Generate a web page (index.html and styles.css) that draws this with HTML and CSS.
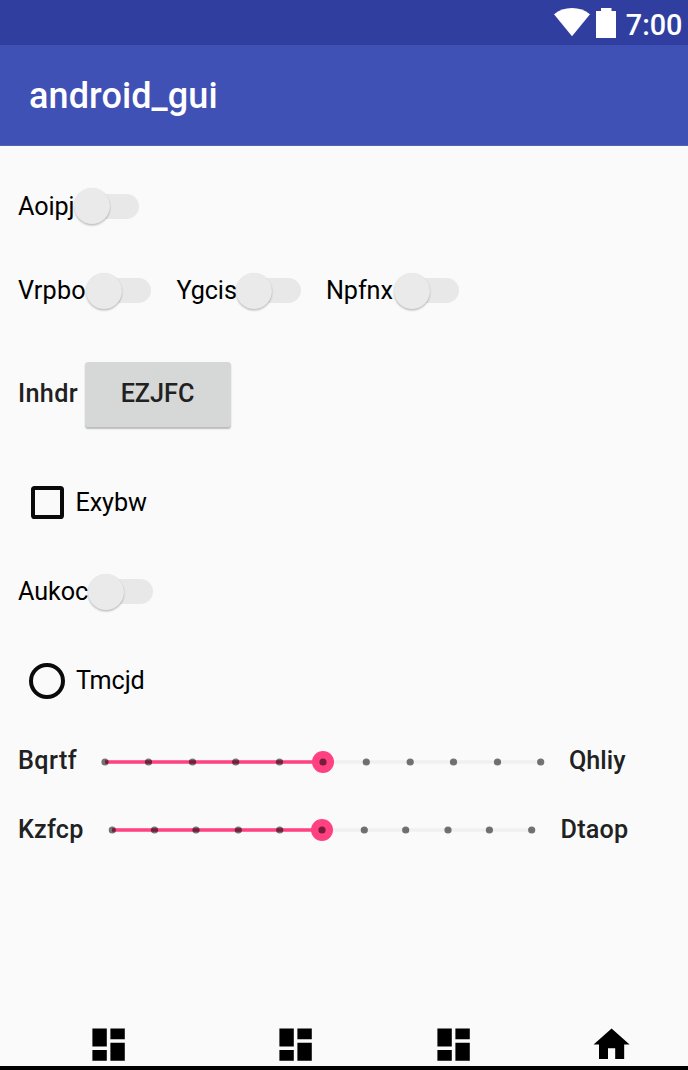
FILE: index.html
```html
<!DOCTYPE html>
<html lang="en">
<head>
<meta charset="utf-8">
<title>android_gui</title>
<link rel="stylesheet" href="styles.css">
</head>
<body>
<svg class="defs" width="0" height="0" aria-hidden="true">
  <symbol id="dashboard" viewBox="0 0 24 24"><path d="M3 13h8V3H3v10zm0 8h8v-6H3v6zm10 0h8V11h-8v10zm0-18v6h8V3h-8z"/></symbol>
  <symbol id="home" viewBox="0 0 24 24"><path d="M10 20v-6h4v6h5v-8h3L12 3 2 12h3v8z"/></symbol>
</svg>
<header class="status">
  <svg class="wifi" width="36" height="29" viewBox="0 0 36 29"><path d="M0 6.200C5 2.200 11 0 18 0s13 2.200 18 6.200L18 28.300z"/></svg>
  <svg class="battery" width="20" height="30" viewBox="0 0 20 30"><path d="M0 3h5V0h10.500v3H20v27H0z"/></svg>
  <span class="clock">7:00</span>
</header>
<div class="appbar"><h1 class="title">android_gui</h1></div>
<main class="content">
  <div class="row r1"><label class="toggle w1"><span class="text">Aoipj</span><span class="track"><span class="thumb"></span></span></label></div>
  <div class="row r2">
    <label class="toggle w2"><span class="text loose">Vrpbo</span><span class="track"><span class="thumb"></span></span></label>
    <label class="toggle w3"><span class="text">Ygcis</span><span class="track"><span class="thumb"></span></span></label>
    <label class="toggle w4"><span class="text">Npfnx</span><span class="track"><span class="thumb"></span></span></label>
  </div>
  <div class="row r3"><span class="caption button-caption">Inhdr</span><button class="button">EZJFC</button></div>
  <div class="row r4"><span class="checkbox"></span><span class="text">Exybw</span></div>
  <div class="row r5"><label class="toggle w5"><span class="text">Aukoc</span><span class="track"><span class="thumb"></span></span></label></div>
  <div class="row r6"><span class="radio"></span><span class="text">Tmcjd</span></div>
  <div class="row r7">
    <span class="caption start-a">Bqrtf</span>
    <svg class="slider" width="460" height="24" viewBox="93 0 460 24">
      <path class="rail" d="M105 12H541"/><path class="fill" d="M105 12H323"/><circle class="knob" cx="323" cy="12" r="11"/>
      <g class="ticks"><circle cx="105" cy="12" r="3.600"/><circle cx="148.500" cy="12" r="3.600"/><circle cx="192.500" cy="12" r="3.600"/><circle cx="235.700" cy="12" r="3.600"/><circle cx="279.500" cy="12" r="3.600"/><circle cx="323" cy="12" r="3.600"/><circle cx="366.300" cy="12" r="3.600"/><circle cx="410.200" cy="12" r="3.600"/><circle cx="453.500" cy="12" r="3.600"/><circle cx="497.500" cy="12" r="3.600"/><circle cx="540.700" cy="12" r="3.600"/></g>
    </svg>
    <span class="caption end-a">Qhliy</span>
  </div>
  <div class="row r8">
    <span class="caption start-b">Kzfcp</span>
    <svg class="slider" width="444" height="24" viewBox="100 0 444 24">
      <path class="rail" d="M112 12H532"/><path class="fill" d="M112 12H322"/><circle class="knob" cx="322" cy="12" r="11"/>
      <g class="ticks"><circle cx="112.300" cy="12" r="3.600"/><circle cx="154.500" cy="12" r="3.600"/><circle cx="196" cy="12" r="3.600"/><circle cx="238.300" cy="12" r="3.600"/><circle cx="279.700" cy="12" r="3.600"/><circle cx="322" cy="12" r="3.600"/><circle cx="364.300" cy="12" r="3.600"/><circle cx="405.700" cy="12" r="3.600"/><circle cx="448" cy="12" r="3.600"/><circle cx="489.400" cy="12" r="3.600"/><circle cx="531.700" cy="12" r="3.600"/></g>
    </svg>
    <span class="caption end-b">Dtaop</span>
  </div>
</main>
<nav class="nav">
  <svg class="icon n1"><use href="#dashboard"/></svg>
  <svg class="icon n2"><use href="#dashboard"/></svg>
  <svg class="icon n3"><use href="#dashboard"/></svg>
  <svg class="icon n4"><use href="#home"/></svg>
</nav>
<div class="bottom-edge"></div>
</body>
</html>
```
FILE: styles.css
```css
* { box-sizing: border-box; }
body { margin: 0; width: 688px; height: 1070px; overflow: hidden; display: flex; flex-direction: column; background: #fafafa; font-family: Roboto, sans-serif; font-size: 25.2px; line-height: 30px; color: #000; }
svg { display: block; flex: none; }
.defs { display: none; }
.status { flex: none; height: 45px; background: #303f9f; display: flex; align-items: flex-start; padding: 8px 5.500px 0 0; justify-content: flex-end; color: #fff; fill: #fff; }
.wifi { margin-right: 6.500px; }
.battery { margin-right: 9.500px; }
.clock { font-size: 28.8px; line-height: 34px; font-weight: 500; }
.appbar { flex: none; height: 101px; background: #3f51b5; padding: 2px 0 0 29px; display: flex; align-items: center; border-bottom: 1px solid #5162bc; }
.title { margin: 0; color: #fff; font-size: 36px; font-weight: 500; line-height: 44px; letter-spacing: 0.1px; }
.content { flex: none; height: 866px; }
.row { display: flex; align-items: center; padding-left: 18px; white-space: nowrap; }
.r1 { height: 120px; }
.r2 { height: 49px; }
.r3 { height: 158px; }
.r4 { height: 58px; padding-left: 31px; }
.r4 .text { padding-top: 1px; }
.r5 { height: 121px; }
.r6 { height: 58px; padding-left: 29px; }
.r6 .text { padding-bottom: 1px; }
.r7 { height: 103px; }
.r8 { height: 34px; }
.text { flex: 1; letter-spacing: -0.1px; }
.r1 .text, .r2 .text { padding-top: 1px; }
.text.loose { letter-spacing: 0.2px; }
.toggle { display: flex; align-items: center; flex: none; }
.w1 { width: 121px; }
.w2 { width: 133px; margin-right: 25.500px; }
.w3 { width: 124.500px; margin-right: 25px; }
.w4 { width: 133px; }
.w5 { width: 135px; }
.track { flex: none; width: 57px; height: 25px; border-radius: 13px; background: #e8e8e8; display: flex; align-items: center; }
.thumb { flex: none; width: 36px; height: 36px; margin-left: -8.500px; border-radius: 50%; background: #eaeaea; box-shadow: 0 1.500px 2px rgba(0,0,0,.23), 0 0 1px rgba(0,0,0,.08); }
.caption { flex: none; font-weight: 500; color: #212121; letter-spacing: 0.2px; padding-bottom: 1px; }
.button-caption { width: 67px; letter-spacing: 0.35px; }
.button { width: 146px; height: 65px; border: 0; border-radius: 3.600px; padding: 0 1px 0 0; background: #d6d8d7; color: #212121; font: 500 25.2px/30px Roboto, sans-serif; box-shadow: 0 1.500px 1.500px rgba(0,0,0,.25); }
.checkbox { width: 33px; height: 33px; border: 4px solid #0a0a0a; border-radius: 3.600px; margin-right: 11.500px; }
.radio { width: 36px; height: 36px; border: 4px solid #0a0a0a; border-radius: 50%; margin-right: 11px; }
.start-a { width: 75px; letter-spacing: 0.45px; }
.end-a { margin-left: 16px; letter-spacing: 0; }
.start-b { width: 82px; }
.end-b { margin-left: 16.500px; }
.rail, .fill { stroke-width: 3.600px; stroke: #f0f0f0; }
.fill { stroke: #ff4081; }
.knob { fill: #ff4081; }
.ticks { fill: rgba(0,0,0,.54); }
.nav { flex: none; height: 53.500px; display: flex; align-items: center; padding: 11px 0 0 86.600px; }
.icon { width: 43.200px; height: 43.200px; }
.n2 { margin-left: 143.900px; }
.n3 { margin-left: 115.100px; }
.n4 { margin-left: 115.100px; }
.bottom-edge { flex: none; height: 5px; background: #000; }
```
